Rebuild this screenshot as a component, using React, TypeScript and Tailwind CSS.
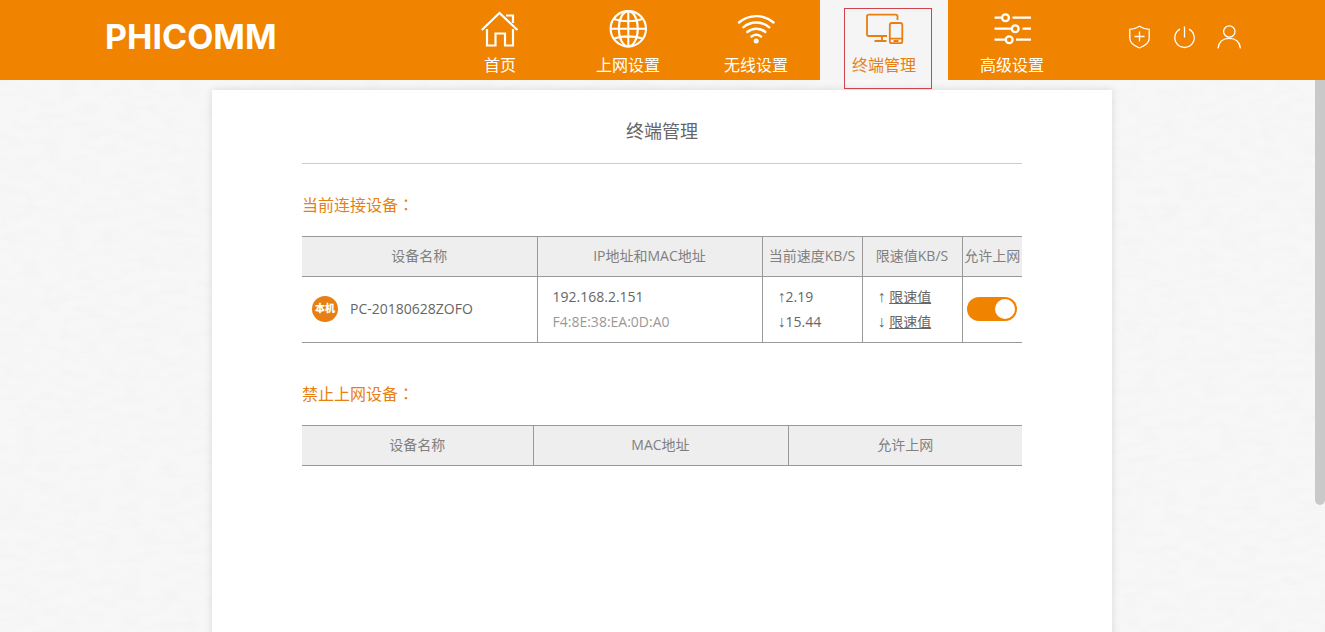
import React from "react";

type IconProps = { className?: string };

const HomeIcon = ({ className }: IconProps) => (
  <svg viewBox="0 0 40 40" className={className} fill="none" stroke="currentColor" strokeWidth="2.2" aria-hidden="true">
    <path d="M1.8 22 19.5 5 37.5 22" />
    <path d="M7 21v16.5h8.500V25.500h9.500v12H33V21" />
    <path d="M26 7.500h7V15" />
  </svg>
);

const GlobeIcon = ({ className }: IconProps) => (
  <svg viewBox="0 0 40 40" className={className} fill="none" stroke="currentColor" strokeWidth="2.1" aria-hidden="true">
    <circle cx="20.300" cy="20.800" r="17.700" />
    <ellipse cx="20.300" cy="20.800" rx="9.500" ry="17.700" />
    <path d="M20.300 3v35.500M2.500 20.800H38M6 11c8 3 20.500 3 28.500 0M6 30.600c8-3 20.500-3 28.500 0" />
  </svg>
);

const WifiIcon = ({ className }: IconProps) => (
  <svg viewBox="0 0 40 40" className={className} fill="none" stroke="currentColor" strokeWidth="2.400" strokeLinecap="round" aria-hidden="true">
    <path d="M3 14.500a26.500 26.500 0 0 1 34.500 0M7.300 19.300a20 20 0 0 1 26 0M11.300 24a14 14 0 0 1 18 0M15.500 28.500a8 8 0 0 1 9.500 0" />
    <circle cx="20.200" cy="33" r="2.500" fill="currentColor" stroke="none" />
  </svg>
);

const DevicesIcon = ({ className }: IconProps) => (
  <svg viewBox="0 0 40 40" className={className} fill="none" stroke="currentColor" strokeWidth="1.800" aria-hidden="true">
    <path d="M33.500 12V8.500a1.800 1.800 0 0 0-1.800-1.800H4.800A1.800 1.800 0 0 0 3 8.500v17.700A1.800 1.800 0 0 0 4.800 28H23M18 28v5M10.500 33h12" />
    <rect x="25.800" y="15" width="12.500" height="20.200" rx="2" />
    <path d="M25.800 30.700h12.500M29.500 33h5" />
  </svg>
);

const SlidersIcon = ({ className }: IconProps) => (
  <svg viewBox="0 0 40 40" className={className} fill="none" stroke="currentColor" strokeWidth="2.300" aria-hidden="true">
    <path d="M2.500 9.700h7.500M20.500 9.700H39M2.500 20.700H19M30.500 20.700H39M2.500 31.700h11M24 31.700h15" />
    <circle cx="13.500" cy="9.700" r="3.400" />
    <circle cx="23.200" cy="20.700" r="3.400" />
    <circle cx="17.200" cy="31.700" r="3.400" />
  </svg>
);

const ShieldIcon = ({ className }: IconProps) => (
  <svg viewBox="0 0 24 24" className={className} fill="none" stroke="currentColor" strokeWidth="1.300" aria-hidden="true">
    <path d="M12.500 1.300c3 2 6.200 3 9.700 3v9c0 4.500-4.500 7.700-9.700 9.700-5.200-2-9.700-5.200-9.700-9.700v-9c3.500 0 6.700-1 9.700-3Z" />
    <path d="M12.500 6.500v10M7.500 11.500h10" />
  </svg>
);

const PowerIcon = ({ className }: IconProps) => (
  <svg viewBox="0 0 24 24" className={className} fill="none" stroke="currentColor" strokeWidth="1.300" aria-hidden="true">
    <path d="M8 4.200a9.700 9.700 0 1 0 9 0M12.500 1.500v11" />
  </svg>
);

const UserIcon = ({ className }: IconProps) => (
  <svg viewBox="0 0 24 24" className={className} fill="none" stroke="currentColor" strokeWidth="1.300" aria-hidden="true">
    <circle cx="12.300" cy="6.500" r="5.700" />
    <path d="M1 23.300c.8-6.500 5-10 11.200-10s10.400 3.500 11.200 10" />
  </svg>
);

const navItems = [
  { label: "首页", Icon: HomeIcon },
  { label: "上网设置", Icon: GlobeIcon },
  { label: "无线设置", Icon: WifiIcon },
  { label: "终端管理", Icon: DevicesIcon, active: true },
  { label: "高级设置", Icon: SlidersIcon },
];

const tools = [
  { label: "安全", Icon: ShieldIcon },
  { label: "重启", Icon: PowerIcon },
  { label: "用户", Icon: UserIcon },
];

function Header() {
  return (
    <header className="relative z-10 flex h-20 shrink-0 items-center bg-[#f08300] pl-[105px] pr-[84px] text-white">
      <a href="#home" className="-mt-[6px] font-['Inter',sans-serif] text-[34px] font-bold leading-none">
        PHICOMM
      </a>
      <nav className="ml-auto flex h-full">
        {navItems.map(({ label, Icon, active }) => (
          <a
            key={label}
            href={`#${label}`}
            aria-current={active ? "page" : undefined}
            className={
              active
                ? "relative flex w-32 flex-col items-center bg-[#f5f5f5] pt-2 text-base leading-6 text-[#e77f13]"
                : "flex w-32 flex-col items-center pt-2 text-base leading-6"
            }
          >
            <Icon className="size-10" />
            <span className="mt-[5px]">{label}</span>
            {active && <span className="absolute -bottom-[9px] left-6 right-4 top-2 border border-[#d0434d]" />}
          </a>
        ))}
      </nav>
      <div className="-mt-[6px] ml-[51px] flex gap-[21px]">
        {tools.map(({ label, Icon }) => (
          <button key={label} type="button" aria-label={label}>
            <Icon className="size-6" />
          </button>
        ))}
      </div>
    </header>
  );
}

function Texture() {
  return (
    <svg className="absolute inset-0 h-full w-full opacity-10" aria-hidden="true">
      <filter id="paper">
        <feTurbulence type="fractalNoise" baseFrequency="0.05 0.12" numOctaves="3" seed="4" />
        <feColorMatrix values="0 0 0 0 0.5  0 0 0 0 0.5  0 0 0 0 0.5  1 0 0 0 -0.4" />
      </filter>
      <rect width="100%" height="100%" filter="url(#paper)" />
    </svg>
  );
}

function SectionTitle({ children }: { children: React.ReactNode }) {
  return (
    <h2 className="text-base leading-6 text-[#e77f13]">
      {children}
      <span className="font-['Noto_Sans_CJK_TC',sans-serif]">：</span>
    </h2>
  );
}

function Arrow({ children }: { children: React.ReactNode }) {
  return <span className="font-['Liberation_Sans',sans-serif] text-base leading-none">{children}</span>;
}

const th = "h-10 border-y border-l border-[#999] p-0 pb-[2px] text-center font-normal first:border-l-0";
const td = "border-y border-l border-[#999] p-0 pb-[2px] first:border-l-0";

function ConnectedTable() {
  return (
    <table className="mt-[19px] w-full table-fixed border-collapse text-sm text-[#666]">
      <colgroup>
        <col className="w-[235px]" />
        <col className="w-[225px]" />
        <col className="w-[100px]" />
        <col className="w-[100px]" />
        <col className="w-[60px]" />
      </colgroup>
      <thead className="bg-[#eee] text-[#808080]">
        <tr>
          <th className={th}>设备名称</th>
          <th className={th}>IP地址和MAC地址</th>
          <th className={th}>当前速度KB/S</th>
          <th className={th}>限速值KB/S</th>
          <th className={th}>允许上网</th>
        </tr>
      </thead>
      <tbody>
        <tr className="h-[66px]">
          <td className={td}>
            <div className="flex items-center gap-3 pl-[10px]">
              <span className="flex size-[26px] items-center justify-center rounded-full bg-[#e77f13] text-[10px] font-black text-white">
                本机
              </span>
              <span>PC-20180628ZOFO</span>
            </div>
          </td>
          <td className={td}>
            <div className="pl-[15px] leading-[25px]">
              <p>192.168.2.151</p>
              <p className="text-[#999]">F4:8E:38:EA:0D:A0</p>
            </div>
          </td>
          <td className={td}>
            <div className="pl-[15px] leading-[25px]">
              <p><Arrow>↑</Arrow>2.19</p>
              <p><Arrow>↓</Arrow>15.44</p>
            </div>
          </td>
          <td className={td}>
            <div className="pl-[15px] leading-[25px]">
              <p>
                <Arrow>↑</Arrow> <a href="#up" className="underline">限速值</a>
              </p>
              <p>
                <Arrow>↓</Arrow> <a href="#down" className="underline">限速值</a>
              </p>
            </div>
          </td>
          <td className={td}>
            <input
              type="checkbox"
              role="switch"
              defaultChecked
              aria-label="允许上网"
              className="mx-auto flex h-6 w-[50px] appearance-none items-center rounded-full bg-[#ccc] px-[2px] before:size-5 before:rounded-full before:bg-white checked:justify-end checked:bg-[#f08300]"
            />
          </td>
        </tr>
      </tbody>
    </table>
  );
}

function BlockedTable() {
  return (
    <table className="mt-[19px] w-full table-fixed border-collapse text-sm text-[#808080]">
      <colgroup>
        <col className="w-[231px]" />
        <col className="w-[255px]" />
        <col className="w-[234px]" />
      </colgroup>
      <thead className="bg-[#eee]">
        <tr>
          <th className={th}>设备名称</th>
          <th className={th}>MAC地址</th>
          <th className={th}>允许上网</th>
        </tr>
      </thead>
    </table>
  );
}

export default function App() {
  return (
    <div className="flex h-screen flex-col bg-[#f7f7f7] font-['Open_Sans','Liberation_Sans','Noto_Sans_CJK_SC',sans-serif]">
      <Header />
      <div className="relative flex-1 overflow-hidden pr-px">
        <Texture />
        <main className="relative mx-auto mt-[10px] min-h-full max-w-[900px] bg-white px-[90px] pb-16 shadow-[0_0_8px_rgba(0,0,0,0.12)]">
          <h1 className="border-b border-[#ccc] pb-[19px] pt-7 text-center text-lg leading-[26px] text-[#666]">
            终端管理
          </h1>
          <section className="mt-7">
            <SectionTitle>当前连接设备</SectionTitle>
            <ConnectedTable />
          </section>
          <section className="mt-[38px]">
            <SectionTitle>禁止上网设备</SectionTitle>
            <BlockedTable />
          </section>
        </main>
        <div className="absolute right-0 top-0 h-[77%] w-[10px] rounded-b-full bg-[#c9c9c9]" />
      </div>
    </div>
  );
}
